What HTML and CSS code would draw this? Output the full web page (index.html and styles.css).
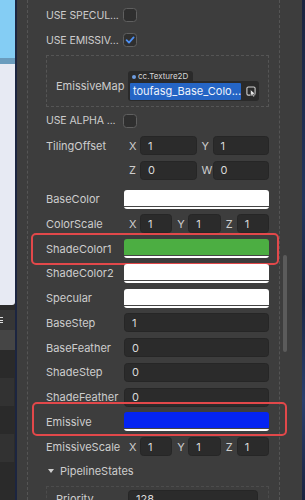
FILE: index.html
```html
<!DOCTYPE html>
<html>
<head>
<meta charset="utf-8">
<link rel="stylesheet" href="styles.css">
</head>
<body>
<div class="app">
  <div class="side">
    <div class="side-sky"></div>
    <div class="side-band"></div>
    <div class="side-light"></div>
    <div class="side-gap"></div>
    <div class="side-bar"><span class="side-icon"></span></div>
    <div class="side-row a"></div>
    <div class="side-row b"></div>
    <div class="side-row c"></div>
    <div class="side-row b"></div>
    <div class="side-row c"></div>
    <div class="side-row b"></div>
  </div>
  <div class="inspector">
    <div class="group">
      <div class="row"><div class="label caps">USE SPECUL...</div><span class="check"></span></div>
      <div class="row"><div class="label caps">USE EMISSIV...</div><span class="check on"><svg viewBox="0 0 14 14" width="14" height="14"><path d="M3.6 7.2 L6 9.6 L10.6 4.4" fill="none" stroke="#4d8ff2" stroke-width="1.8" stroke-linecap="round" stroke-linejoin="round"/></svg></span></div>
      <div class="asset-box">
        <div class="asset-label">EmissiveMap</div>
        <div class="asset">
          <div class="asset-tag"><span class="dot"></span>cc.Texture2D</div>
          <div class="asset-field">
            <div class="asset-name">toufasg_Base_Colo...</div>
            <svg class="asset-icon" viewBox="0 0 12 12" width="11" height="11"><rect x="1" y="1" width="9" height="9" rx="1.5" fill="none" stroke="#d0d0d0" stroke-width="1.2"/><path d="M5 4 L5 11 L6.8 9.4 L8 12 L9.2 11.4 L8 8.9 L10.4 8.8 Z" fill="#e8e8e8" stroke="#2a2a2a" stroke-width="0.6"/></svg>
          </div>
        </div>
      </div>
      <div class="row alpha"><div class="label caps">USE ALPHA ...</div><span class="check"></span></div>
      <div class="vec-block">
        <div class="row"><div class="label">TilingOffset</div>
          <div class="value vec"><span class="axis">X</span><span class="input">1</span><span class="axis">Y</span><span class="input">1</span></div></div>
        <div class="row"><div class="label"></div>
          <div class="value vec"><span class="axis">Z</span><span class="input">0</span><span class="axis">W</span><span class="input">0</span></div></div>
      </div>
      <div class="row"><div class="label">BaseColor</div><div class="value swatch"><span class="c white"></span><span class="a"></span></div></div>
      <div class="row"><div class="label">ColorScale</div>
        <div class="value vec"><span class="axis">X</span><span class="input">1</span><span class="axis">Y</span><span class="input">1</span><span class="axis">Z</span><span class="input">1</span></div></div>
      <div class="row"><div class="label">ShadeColor1</div><div class="value swatch"><span class="c green"></span><span class="a"></span></div><span class="mark mark1"></span></div>
      <div class="row"><div class="label">ShadeColor2</div><div class="value swatch"><span class="c white"></span><span class="a"></span></div></div>
      <div class="row"><div class="label">Specular</div><div class="value swatch"><span class="c white"></span><span class="a"></span></div></div>
      <div class="row"><div class="label">BaseStep</div><div class="value input">1</div></div>
      <div class="row"><div class="label">BaseFeather</div><div class="value input">0</div></div>
      <div class="row"><div class="label">ShadeStep</div><div class="value input">0</div></div>
      <div class="row"><div class="label">ShadeFeather</div><div class="value input">0</div></div>
      <div class="row"><div class="label">Emissive</div><div class="value swatch"><span class="c blue"></span><span class="a"></span></div><span class="mark mark2"></span></div>
      <div class="row"><div class="label">EmissiveScale</div>
        <div class="value vec"><span class="axis">X</span><span class="input">1</span><span class="axis">Y</span><span class="input">1</span><span class="axis">Z</span><span class="input">1</span></div></div>
      <div class="row"><div class="label fold"><span class="tri"></span>PipelineStates</div></div>
      <div class="sub-box">
        <div class="row"><div class="label sub">Priority</div><div class="value input">128</div></div>
      </div>
    </div>
    <div class="scroll"><div class="thumb"></div></div>
  </div>
  <div class="scene"></div>
</div>
</body>
</html>
```
FILE: styles.css
```css
* { box-sizing: border-box; }
html, body { margin: 0; padding: 0; }
body {
  width: 305px; height: 500px; overflow: hidden;
  background: #1c2540;
  font-family: "Inter", "Liberation Sans", sans-serif;
  font-size: 11px;
  color: #cfcfcf;
}
.app { display: flex; height: 500px; }

.side { width: 15px; flex: none; display: flex; flex-direction: column; background: #2b2b2b; }
.side-sky { height: 58px; background: #84cdf4; }
.side-band { height: 6px; background: #6a9cbd; }
.side-light { height: 241px; background: #e7eaf3; border-bottom-right-radius: 3px; }
.side-gap { height: 5px; }
.side-bar { height: 20px; background: #363636; position: relative; }
.side-icon { position: absolute; left: 0; top: 7px; width: 3px; height: 6px;
  border-top: 1px solid #ddd; border-bottom: 1px solid #ddd; }
.side-icon::after { content: ""; position: absolute; left: 0; top: 1.5px; width: 3px; height: 1px; background: #ddd; }
.side-row { height: 28px; }
.side-row.a { height: 20px; background: #454545; }
.side-row.b { background: #2a2a2a; }
.side-row.c { background: #323232; margin: 0 1px 0 0; }

.inspector { flex: none; width: 285px; margin-left: 2px; background: #3d3d3d; display: flex; position: relative; }
.group {
  margin-left: 10px; width: 253px; height: 500px;
  border-left: 1px dashed #555; border-right: 1px dashed #555;
  padding: 3px 10px 0 18px;
  display: flex; flex-direction: column;
}
.row { display: flex; align-items: center; height: 24.75px; flex: none; position: relative; }
.label { width: 78px; flex: none; white-space: nowrap; color: #cdcdcd; }
.caps { font-size: 10.5px; letter-spacing: -0.1px; }
.value { flex: 1; min-width: 0; }

.check { width: 14px; height: 14px; border: 1.5px solid #5f5f5f; border-radius: 3.5px; background: #2f2f2f;
  margin-left: -1px; display: flex; align-items: center; justify-content: center; }
.check svg { display: block; margin: -1.5px; }

.asset-box { margin-top: 2.5px; height: 52px; border: 1px dashed #555; display: flex; align-items: center; padding: 0 10px 0 9px; flex: none; }
.asset-label { width: 72px; flex: none; margin-top: 10px; color: #cdcdcd; }
.asset { flex: 1; display: flex; flex-direction: column; align-items: flex-start; margin-top: 10px; }
.asset-tag { font-size: 8px; color: #d6d6d6; background: #2a2a2a; padding: 1px 5px 0 4px; height: 10px; line-height: 9px;
  border-radius: 3px 3px 0 0; display: flex; align-items: center; gap: 2px; }
.dot { width: 4px; height: 4px; border-radius: 50%; background: #6f9de0; display: inline-block; }
.asset-field { width: 131px; height: 20px; background: #2a2a2a; border-radius: 0 3px 3px 3px; display: flex; align-items: center; padding: 1px 2px; }
.asset-name { width: 112px; height: 17px; background: #2565c5; color: #eef3fb; font-size: 11px; line-height: 17px; padding-left: 3px; border-radius: 1px; white-space: nowrap; overflow: hidden; }
.asset-icon { margin-left: 5px; }

.alpha { margin-top: 1.5px; }
.vec-block { margin-bottom: 4px; display: flex; flex-direction: column; }
.vec { display: flex; align-items: center; }
.axis { width: 16px; flex: none; padding-left: 5px; color: #cdcdcd; }
.input { display: flex; align-items: center; height: 19px; background: #2b2b2b; border: 1px solid #262626; border-radius: 3.5px; padding-left: 7px; color: #dadada; }
.vec .input { flex: 1; min-width: 0; }

.swatch { height: 19px; border-radius: 3px; overflow: hidden; display: flex; flex-direction: column; background: #454545; }
.swatch .c { flex: 1; }
.swatch .a { height: 2px; margin-top: 1px; background: #fff; }
.white { background: #ffffff; }
.green { background: #4cae42; }
.blue { background: #0424f2; }

.mark { position: absolute; border: 2px solid #e2484a; border-radius: 5px; pointer-events: none; }
.mark1 { left: -15px; right: -10px; top: -3px; bottom: -4px; }
.mark2 { left: -14px; right: -18px; top: -8px; bottom: -2px; }

.fold { display: flex; align-items: center; width: auto; }
.tri { width: 0; height: 0; border-left: 3px solid transparent; border-right: 3px solid transparent; border-top: 4px solid #cfcfcf; margin: 0 6px 0 2px; }
.sub-box { border-top: 1px dashed #4c4c4c; border-left: 1px dashed #4c4c4c; border-right: 1px dashed #4c4c4c; padding: 0 10px 0 9px; margin-top: 2px; }
.sub { width: 72px; }

.scroll { width: 22px; flex: none; position: relative; }
.thumb { position: absolute; left: 3px; top: 255px; width: 4px; height: 97px; background: #5b5b5b; border-radius: 2px; }
.scene { flex: 1; background: linear-gradient(180deg, #1b2440 0%, #22355e 40%, #1b2746 60%, #2a3f6e 80%, #1a2340 100%); }
```
